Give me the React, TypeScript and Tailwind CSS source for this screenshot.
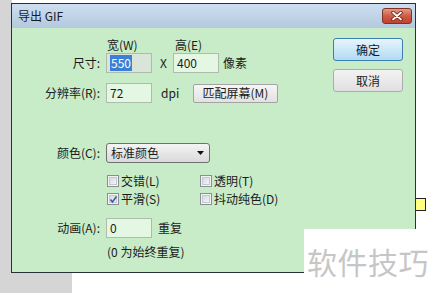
const font = "font-['Noto_Sans_CJK_SC','Microsoft_YaHei',sans-serif]";

function Field({ value, selected, className = "" }: { value: string; selected?: boolean; className?: string }) {
  return (
    <div
      className={`flex h-[20px] w-[46px] items-center border border-[#aebcae] pl-[3px] text-[12px] leading-none ${
        selected ? "bg-[#d9e5d9]" : "bg-[#e3f7e3]"
      } ${className}`}
    >
      {selected ? <span className="bg-[#3b7fd6] px-[1px] py-[2px] text-white">{value}</span> : <span>{value}</span>}
    </div>
  );
}

function Check({ label, checked }: { label: string; checked?: boolean }) {
  return (
    <div className="flex h-[18px] w-[93px] items-center gap-[2px]">
      <span className="flex h-[12px] w-[12px] items-center justify-center border border-[#8a8f94] bg-[#f4f4f4]">
        <span className="flex h-[8px] w-[8px] items-center justify-center border border-[#c3c9cf] bg-gradient-to-br from-[#d5dbe2] to-[#f3f5f7]">
          {checked && (
            <svg width="9" height="9" viewBox="0 0 9 9" className="overflow-visible">
              <path d="M1.5 4.5 L3.5 7 L7.5 1.5" fill="none" stroke="#3d5a9e" strokeWidth="1.6" />
            </svg>
          )}
        </span>
      </span>
      <span className="text-[12px] leading-none">{label}</span>
    </div>
  );
}

function Label({ text }: { text: string }) {
  return <span className="w-[89px] shrink-0 pr-[1px] text-right text-[12px] leading-none">{text}</span>;
}

export default function App() {
  return (
    <div className={`relative h-[293px] w-[434px] overflow-hidden bg-white text-[#1b1b1b] ${font}`}>
      {/* desktop windows behind the dialog */}
      <div className="absolute left-0 top-0 h-[293px] w-[12px] bg-[#d5d5d5]" />
      <div className="absolute left-0 top-[272px] h-[21px] w-[72px] bg-[#d5d5d5]" />
      <div className="absolute left-[415px] top-[198px] h-[13px] w-[11px] border border-[#222] bg-[#ffff80]" />

      <div className="absolute left-[11px] top-[3px] flex h-[270px] w-[405px] flex-col border border-[#25323d] bg-[#c8ebc8]">
        <div className="flex h-[23px] items-start justify-between bg-gradient-to-b from-[#cddef0] to-[#b5cadf] pl-[6px] pr-[3px] pt-[4px]">
          <span className="mt-[1px] text-[12px] leading-[14px]">导出 GIF</span>
          <div className="flex h-[16px] w-[30px] items-center justify-center rounded-[3px] border border-[#7d3426] bg-gradient-to-b from-[#e39a87] via-[#cf5b45] to-[#c0432f]">
            <svg width="12" height="10" viewBox="0 0 12 10">
              <path d="M2 1.5 L10 8.5 M10 1.5 L2 8.5" stroke="#5a1d12" strokeWidth="3.4" strokeLinecap="round" />
              <path d="M2 1.5 L10 8.5 M10 1.5 L2 8.5" stroke="#ffffff" strokeWidth="1.8" strokeLinecap="round" />
            </svg>
          </div>
        </div>

        <div className="flex flex-1 border-t border-[#b2d2b2]">
          <div className="flex flex-col">
            <div className="mt-[10px] flex h-[14px] items-center text-[12px] leading-none">
              <span className="w-[95px]" />
              <span className="w-[68px]">宽(W)</span>
              <span>高(E)</span>
            </div>
            <div className="mt-[1px] flex h-[20px] items-center">
              <Label text="尺寸:" />
              <Field value="550" selected className="ml-[5px]" />
              <span className="w-[21px] pl-[8px] text-[12px] leading-none">X</span>
              <Field value="400" />
              <span className="ml-[4px] text-[12px] leading-none">像素</span>
            </div>
            <div className="mt-[10px] flex h-[20px] items-center">
              <Label text="分辨率(R):" />
              <Field value="72" className="ml-[5px]" />
              <span className="w-[41px] pl-[9px] text-[12px] leading-none">dpi</span>
              <button className="flex h-[19px] w-[85px] items-center justify-center rounded-[2px] border border-[#a3a3a3] bg-gradient-to-b from-[#f6f6f6] to-[#e2e2e2] text-[12px] leading-none">
                匹配屏幕(M)
              </button>
            </div>
            <div className="mt-[40px] flex h-[20px] items-center">
              <Label text="颜色(C):" />
              <div className="ml-[5px] flex h-[20px] w-[104px] items-center justify-between rounded-[3px] border border-[#707070] bg-gradient-to-b from-[#f4f4f4] to-[#dadada] pl-[4px] pr-[5px] text-[12px] leading-none">
                <span>标准颜色</span>
                <svg width="7" height="4" viewBox="0 0 7 4">
                  <path d="M0 0 H7 L3.5 4 Z" fill="#111" />
                </svg>
              </div>
            </div>
            <div className="mt-[9px] flex pl-[95px]">
              <Check label="交错(L)" />
              <Check label="透明(T)" />
            </div>
            <div className="flex pl-[95px]">
              <Check label="平滑(S)" checked />
              <Check label="抖动纯色(D)" />
            </div>
            <div className="mt-[10px] flex h-[20px] items-center">
              <Label text="动画(A):" />
              <Field value="0" className="ml-[5px]" />
              <span className="ml-[6px] text-[12px] leading-none">重复</span>
            </div>
            <div className="ml-[95px] mt-[7px] text-[12px] leading-[14px]">(0 为始终重复)</div>
          </div>

          <div className="ml-auto flex flex-col gap-[8px] pr-[12px] pt-[10px]">
            <button className="flex h-[23px] w-[70px] items-center justify-center rounded-[3px] border border-[#3c7fb1] bg-gradient-to-b from-[#e7f4fc] to-[#b2dbf4] text-[12px] leading-none">
              确定
            </button>
            <button className="flex h-[23px] w-[70px] items-center justify-center rounded-[3px] border border-[#acacac] bg-gradient-to-b from-[#f3f3f3] to-[#e0e0e0] text-[12px] leading-none">
              取消
            </button>
          </div>
        </div>
      </div>

      <div className="absolute left-[304px] top-[229px] flex h-[64px] w-[130px] items-center bg-white pl-[3px]">
        <span className="text-[30px] leading-none tracking-[0.5px] text-[#c6c6c6]">软件技巧</span>
      </div>
    </div>
  );
}
